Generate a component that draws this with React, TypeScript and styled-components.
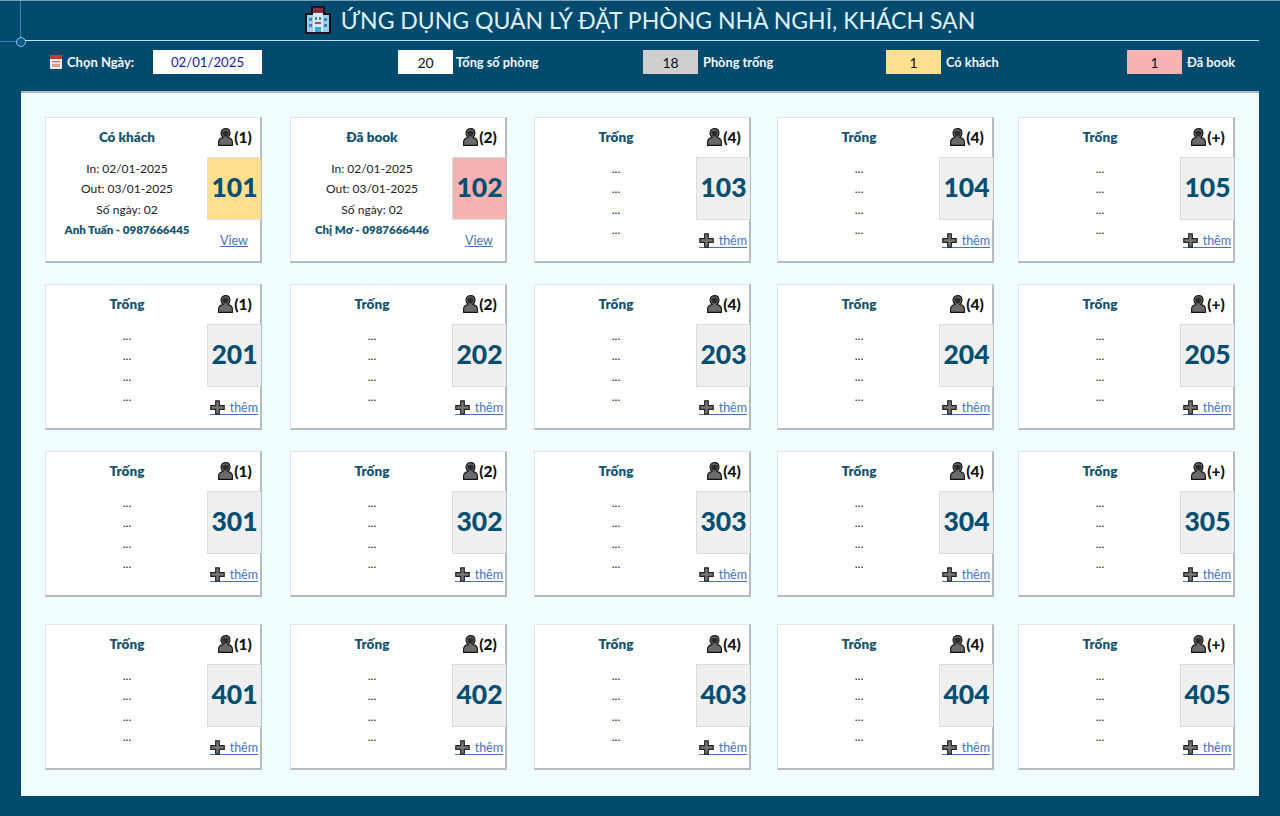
import React from 'react';
import styled, { createGlobalStyle } from 'styled-components';

const Global = createGlobalStyle`
  html, body { margin: 0; padding: 0; background: #004a6e; }
  body { font-family: "Lato", "Noto Sans", sans-serif; }
  * { box-sizing: border-box; }
`;

const Page = styled.div`
  position: relative;
  width: 1280px;
  height: 816px;
  overflow: hidden;
  background: #004a6e;
  border-top: 1px solid #7d9fb1;
  padding: 0 21px;
`;
const GuideLine = styled.div`
  position: absolute;
  left: 20px;
  top: 0;
  width: 1px;
  height: 37px;
  background: #3f7fc9;
`;
const GuideStub = styled.div`
  position: absolute;
  left: 0;
  top: 40px;
  width: 17px;
  height: 1px;
  background: #3f7fc9;
`;
const GuideDot = styled.div`
  position: absolute;
  left: 16px;
  top: 36px;
  width: 10px;
  height: 10px;
  border-radius: 50%;
  border: 1.5px solid #8fc4ee;
  background: #0a5a8a;
`;
const Header = styled.header`
  height: 40px;
  display: flex;
  align-items: center;
  justify-content: center;
  gap: 10px;
  border-bottom: 1px solid #bfe3f7;
  padding: 0 0 2px 0;
`;
const Title = styled.h1`
  margin: 0;
  font-size: 23px;
  font-weight: 400;
  color: #dff1fb;
  white-space: nowrap;
`;
const StatBar = styled.div`
  height: 42px;
  display: grid;
  grid-template-columns: 377px 245px 243px 241px 1fr;
  align-items: center;
`;
const DateGroup = styled.div`
  display: flex;
  align-items: center;
  padding-left: 29px;
`;
const DateLabel = styled.span`
  font-size: 13px;
  font-weight: 700;
  color: #f2f8fb;
  margin-left: 5px;
  width: 86px;
`;
const DateValue = styled.div`
  width: 109px;
  height: 24px;
  background: #fff;
  color: #1a1ab0;
  font-size: 13.2px;
  display: flex;
  align-items: center;
  justify-content: center;
`;
const Stat = styled.div<{ $gap: number }>`
  display: flex;
  align-items: center;
  gap: ${p => p.$gap}px;
`;
const StatValue = styled.div<{ $bg: string }>`
  width: 55px;
  height: 24px;
  background: ${p => p.$bg};
  color: #111;
  font-size: 14px;
  display: flex;
  align-items: center;
  justify-content: center;
`;
const StatLabel = styled.span`
  font-size: 12.8px;
  font-weight: 700;
  color: #f2f8fb;
  white-space: nowrap;
`;
const Panel = styled.main`
  height: 705px;
  margin-top: 8px;
  background: #f1fcfe;
  border-top: 2px solid #a9b7bd;
  padding: 24px 0 0 24px;
  display: grid;
  grid-template-columns: 245px 244px 243px 241px 217px;
  grid-template-rows: 167px 167px 173px 146px;
`;
const Card = styled.article`
  width: 217px;
  height: 146px;
  background: #fff;
  border: 1px solid #dde3e6;
  border-right: 2px solid #b4bcc0;
  border-bottom: 2px solid #b4bcc0;
  display: grid;
  grid-template-columns: 161px 54px;
`;
const Info = styled.div`
  display: flex;
  flex-direction: column;
  align-items: center;
  padding: 10px 0 0 1px;
`;
const Status = styled.div`
  height: 19px;
  line-height: 19px;
  font-size: 13.5px;
  font-weight: 800;
  color: #17546f;
  margin-bottom: 11.5px;
`;
const Line = styled.div<{ $strong?: boolean }>`
  height: 20.6px;
  line-height: 20.6px;
  font-size: ${p => (p.$strong ? '11.5px' : '12px')};
  font-weight: ${p => (p.$strong ? 800 : 400)};
  color: ${p => (p.$strong ? '#17546f' : '#222')};
  white-space: nowrap;
`;
const Side = styled.div`
  display: flex;
  flex-direction: column;
`;
const Capacity = styled.div`
  height: 39px;
  display: flex;
  align-items: center;
  justify-content: center;
  padding: 0 0 2px 2px;
  gap: 1px;
  font-size: 15.5px;
  font-weight: 900;
  color: #111;
`;
const Tile = styled.div<{ $bg: string }>`
  height: 63px;
  background: ${p => p.$bg};
  border-left: 1px solid #dcdcdc;
  border-top: 1px solid #dcdcdc;
  border-bottom: 1px solid #dcdcdc;
  padding-bottom: 3px;
  display: flex;
  align-items: center;
  justify-content: center;
  font-size: 26.5px;
  font-weight: 900;
  color: #004f72;
`;
const Action = styled.a`
  margin-top: 12px;
  height: 16px;
  display: flex;
  align-items: center;
  justify-content: center;
  font-size: 12.5px;
  color: #4472c4;
  text-decoration: underline;
`;
const AddAction = styled(Action)`
  justify-content: space-between;
  margin: 12px 3px 0 3px;
  padding-top: 2px;
  border-bottom: 1px solid #4472c4;
  text-decoration: none;
`;

const Hotel = () => (
  <svg width="26" height="28" viewBox="0 0 26 28">
    <rect x="0" y="7" width="26" height="21" fill="#1a1420" />
    <rect x="6" y="0" width="14" height="8" fill="#1a1420" />
    <rect x="8" y="2" width="10" height="6" fill="#8a2a42" />
    <rect x="2" y="9" width="22" height="17" fill="#9fd0ea" />
    <rect x="8" y="7" width="10" height="19" fill="#d5e9f4" />
    <rect x="4" y="12" width="3" height="3" fill="#3f86b8" />
    <rect x="19" y="12" width="3" height="3" fill="#3f86b8" />
    <rect x="4" y="18" width="3" height="3" fill="#3f86b8" />
    <rect x="19" y="18" width="3" height="3" fill="#3f86b8" />
    <rect x="10" y="11" width="2" height="3" fill="#3f86b8" />
    <rect x="14" y="11" width="2" height="3" fill="#3f86b8" />
    <rect x="10" y="16" width="6" height="2" fill="#c0455f" />
    <rect x="10" y="21" width="6" height="5" fill="#3fa9d6" />
  </svg>
);

const CalendarIcon = () => (
  <svg width="12" height="14" viewBox="0 0 12 14">
    <rect x="0" y="0" width="12" height="14" rx="1" fill="#f3ece8" />
    <rect x="0" y="0" width="12" height="4" fill="#c23b36" />
    <rect x="2" y="6" width="8" height="1.5" fill="#d77a6e" />
    <rect x="2" y="9" width="8" height="3" fill="#d6a08f" />
  </svg>
);

const PersonIcon = () => (
  <svg width="15" height="18" viewBox="0 0 15 18">
    <path d="M7.5 .6C4.700 .6 3 2.700 3 5.300c0 1.800 .8 3.200 2 4.100-2.600 .7-4.400 2.200-4.400 4.700v3.300h13.800v-3.300c0-2.500-1.800-4-4.400-4.700 1.200-.9 2-2.300 2-4.100C12 2.700 10.300 .6 7.500 .6z" fill="#6a6a6a" stroke="#111" strokeWidth="1.100" />
    <path d="M4.200 4.200c1.200-2 5.400-2 6.600 0-.5 3-1.600 4.400-3.300 4.400S4.700 7.200 4.200 4.200z" fill="#2c2c2c" />
  </svg>
);

const PlusIcon = () => (
  <svg width="15" height="15" viewBox="0 0 15 15">
    <path d="M5.700 .8h3.600v4.900h4.900v3.600H9.300v4.900H5.700V9.300H.8V5.700h4.900z" fill="#777" stroke="#222" strokeWidth="1.200" />
  </svg>
);

interface RoomData {
  no: number;
  capacity: string;
  status?: string;
  bg?: string;
  lines?: string[];
  contact?: string;
}

const capacities = ['1', '2', '4', '4', '+'];
const floors = [1, 2, 3, 4];

const special: Record<number, Partial<RoomData>> = {
  101: {
    status: 'Có khách',
    bg: '#ffe08f',
    lines: ['In: 02/01-2025', 'Out: 03/01-2025', 'Số ngày: 02'],
    contact: 'Anh Tuấn - 0987666445',
  },
  102: {
    status: 'Đã book',
    bg: '#f7b2b2',
    lines: ['In: 02/01-2025', 'Out: 03/01-2025', 'Số ngày: 02'],
    contact: 'Chị Mơ - 0987666446',
  },
};

const rooms: RoomData[] = floors.flatMap(f =>
  capacities.map((capacity, i) => {
    const no = f * 100 + i + 1;
    return { no, capacity, ...special[no] };
  }),
);

const stats = [
  { value: '20', bg: '#fff', label: 'Tổng số phòng', gap: 3 },
  { value: '18', bg: '#cfcfcf', label: 'Phòng trống', gap: 5 },
  { value: '1', bg: '#ffe08f', label: 'Có khách', gap: 5 },
  { value: '1', bg: '#f7b2b2', label: 'Đã book', gap: 5 },
];

const Room: React.FC<{ room: RoomData }> = ({ room }) => (
  <Card>
    <Info>
      <Status>{room.status || 'Trống'}</Status>
      {room.lines ? (
        <>
          {room.lines.map(l => (
            <Line key={l}>{l}</Line>
          ))}
          <Line $strong>{room.contact}</Line>
        </>
      ) : (
        ['a', 'b', 'c', 'd'].map(k => <Line key={k}>...</Line>)
      )}
    </Info>
    <Side>
      <Capacity>
        <PersonIcon />({room.capacity})
      </Capacity>
      <Tile $bg={room.bg || '#efefef'}>{room.no}</Tile>
      {room.lines ? (
        <Action>View</Action>
      ) : (
        <AddAction>
          <PlusIcon />
          thêm
        </AddAction>
      )}
    </Side>
  </Card>
);

export default function App() {
  return (
    <Page>
      <Global />
      <GuideLine />
      <GuideStub />
      <GuideDot />
      <Header>
        <Hotel />
        <Title>ỨNG DỤNG QUẢN LÝ ĐẶT PHÒNG NHÀ NGHỈ, KHÁCH SẠN</Title>
      </Header>
      <StatBar>
        <DateGroup>
          <CalendarIcon />
          <DateLabel>Chọn Ngày:</DateLabel>
          <DateValue>02/01/2025</DateValue>
        </DateGroup>
        {stats.map(s => (
          <Stat key={s.label} $gap={s.gap}>
            <StatValue $bg={s.bg}>{s.value}</StatValue>
            <StatLabel>{s.label}</StatLabel>
          </Stat>
        ))}
      </StatBar>
      <Panel>
        {rooms.map(r => (
          <Room key={r.no} room={r} />
        ))}
      </Panel>
    </Page>
  );
}
